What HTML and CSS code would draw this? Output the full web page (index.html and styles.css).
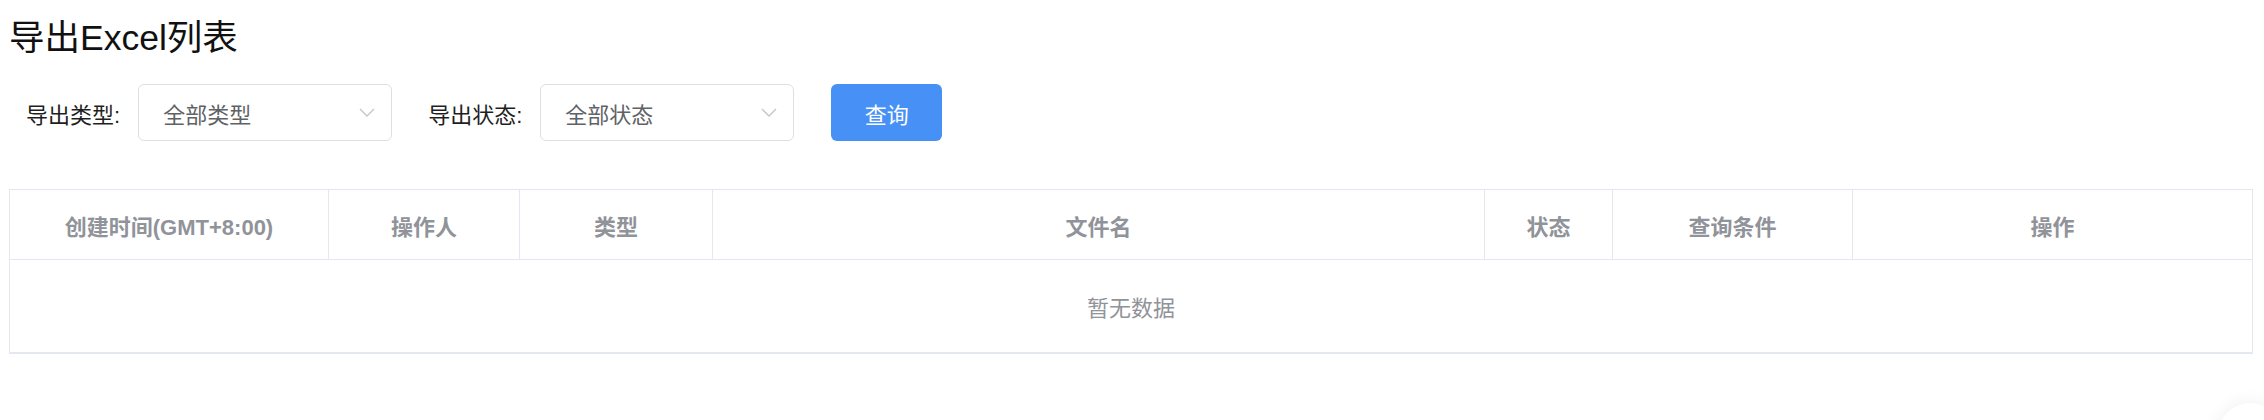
FILE: index.html
```html
<!DOCTYPE html>
<html lang="zh-CN">
<head>
<meta charset="utf-8">
<title>导出Excel列表</title>
<link rel="stylesheet" href="styles.css">
</head>
<body>
<div class="page">
  <h2 class="title">导出Excel列表</h2>
  <form class="filters">
    <div class="form-item">
      <label class="form-label">导出类型:</label>
      <div class="select">
        <span class="select-value">全部类型</span>
        <svg class="arrow" width="16" height="9" viewBox="0 0 16 9"><polyline points="1,1 8,8 15,1" fill="none" stroke="#c0c4cc" stroke-width="1.3"/></svg>
      </div>
    </div>
    <div class="form-item">
      <label class="form-label">导出状态:</label>
      <div class="select">
        <span class="select-value">全部状态</span>
        <svg class="arrow" width="16" height="9" viewBox="0 0 16 9"><polyline points="1,1 8,8 15,1" fill="none" stroke="#c0c4cc" stroke-width="1.3"/></svg>
      </div>
    </div>
    <button type="button" class="btn-primary">查询</button>
  </form>
  <div class="table">
    <div class="table-head">
      <div class="th">创建时间(GMT+8:00)</div>
      <div class="th">操作人</div>
      <div class="th">类型</div>
      <div class="th">文件名</div>
      <div class="th">状态</div>
      <div class="th">查询条件</div>
      <div class="th">操作</div>
    </div>
    <div class="table-empty">暂无数据</div>
  </div>
</div>
<div class="float-ball"></div>
</body>
</html>
```
FILE: styles.css
```css
html, body {
  margin: 0;
  padding: 0;
  background: #ffffff;
}
body {
  font-family: "Liberation Sans", "Noto Sans CJK SC", sans-serif;
  color: #1f1f1f;
  overflow: hidden;
}
.page {
  padding: 15px 11px 0 9px;
}
.title {
  margin: 0;
  font-size: 35.5px;
  font-weight: normal;
  line-height: 46px;
  color: #111111;
}
.filters {
  display: flex;
  align-items: center;
  margin: 23px 0 0 0;
  height: 57px;
  padding-left: 17px;
}
.form-item {
  display: flex;
  align-items: center;
  margin-right: 36px;
}
.form-label {
  font-size: 22px;
  color: #1f1f1f;
  padding-right: 18px;
  white-space: nowrap;
}
.select {
  box-sizing: border-box;
  width: 254px;
  height: 57px;
  border: 1px solid #dcdfe6;
  border-radius: 6px;
  display: flex;
  align-items: center;
  justify-content: space-between;
  padding: 0 16px 0 24px;
}
.select-value {
  font-size: 22px;
  color: #606266;
}
.arrow {
  display: block;
}
.btn-primary {
  box-sizing: border-box;
  width: 111px;
  height: 57px;
  margin-left: 1px;
  border: none;
  border-radius: 6px;
  background: #4790f6;
  color: #ffffff;
  font-family: "Liberation Sans", "Noto Sans CJK SC", sans-serif;
  font-size: 22px;
  padding: 0;
}
.table {
  margin-top: 48px;
  border: 1px solid #e4e7ef;
  border-bottom: 2px solid #e4e8f2;
  width: 2244px;
  box-sizing: border-box;
}
.table-head {
  display: grid;
  grid-template-columns: 319px 191px 193px 772px 128px 240px 1fr;
  border-bottom: 1px solid #e4e7ef;
}
.th {
  height: 69px;
  display: flex;
  align-items: center;
  justify-content: center;
  font-size: 22px;
  font-weight: bold;
  color: #909399;
  border-right: 1px solid #e4e7ef;
}
.th:last-child {
  border-right: none;
}
.table-empty {
  height: 92px;
  display: flex;
  align-items: center;
  justify-content: center;
  font-size: 22px;
  color: #909399;
}
.float-ball {
  position: fixed;
  right: -18px;
  bottom: -47px;
  width: 64px;
  height: 64px;
  border-radius: 50%;
  background: #ffffff;
  box-shadow: 0 0 18px rgba(0, 0, 0, 0.07);
}
```
